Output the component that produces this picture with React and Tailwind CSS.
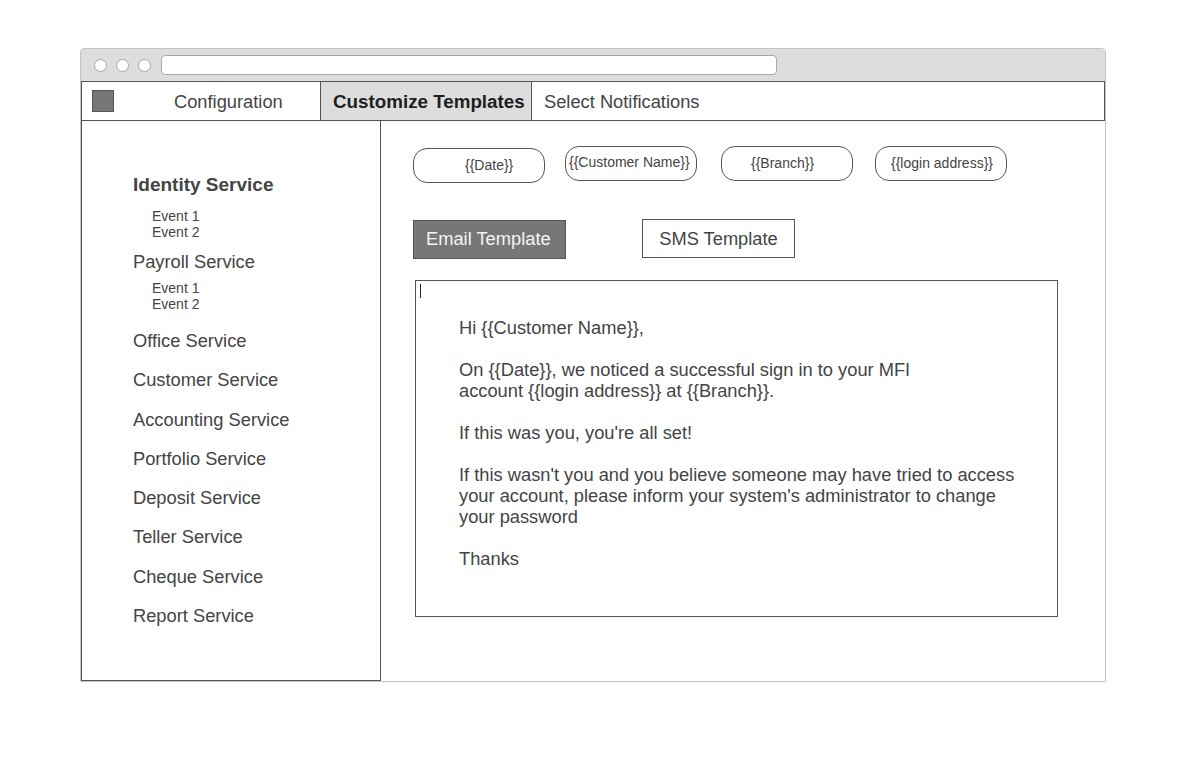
import React from 'react';

const services = [
  { name: 'Office Service' },
  { name: 'Customer Service' },
  { name: 'Accounting Service' },
  { name: 'Portfolio Service' },
  { name: 'Deposit Service' },
  { name: 'Teller Service' },
  { name: 'Cheque Service' },
  { name: 'Report Service' },
];

const Events = ({ className = '' }) => (
  <div className={`pl-[19px] text-[14px] leading-[16px] ${className}`}>
    <div>Event 1</div>
    <div>Event 2</div>
  </div>
);

const Pill = ({ children, className = '' }) => (
  <div className={`w-[132px] h-[35px] border border-[#555] rounded-[14px] bg-white flex items-center text-[14px] whitespace-nowrap text-[#444] ${className}`}>
    {children}
  </div>
);

const App = () => {
  const font = { fontFamily: '"Liberation Sans", Arial, sans-serif' };

  return (
    <div className="w-full h-[760px] bg-white pt-[48px] pl-[80px] text-[#444]" style={font}>
      <div className="w-[1026px] border border-[#c4c4c4] rounded-t-[4px] bg-white">
        {/* title bar */}
        <div className="h-[32px] bg-[#dddddd] rounded-t-[4px] flex items-center pl-[13px]">
          <div className="flex gap-[9px]">
            <span className="w-[13px] h-[13px] rounded-full bg-white border border-[#a8a8a8]" />
            <span className="w-[13px] h-[13px] rounded-full bg-white border border-[#a8a8a8]" />
            <span className="w-[13px] h-[13px] rounded-full bg-white border border-[#a8a8a8]" />
          </div>
          <div className="ml-[10px] w-[616px] h-[20px] bg-white border border-[#a8a8a8] rounded-[4px]" />
        </div>

        {/* tab bar */}
        <div className="h-[40px] border border-[#555] flex text-[18.3px]">
          <div className="w-[239px] border-r border-[#555] flex items-center pl-[10px]">
            <span className="w-[22px] h-[22px] bg-[#777] border border-[#555]" />
            <span className="ml-[60px] pt-[2px]">Configuration</span>
          </div>
          <div className="w-[211px] border-r border-[#555] bg-[#dddddd] flex items-center pl-[12px] pt-[2px] font-bold text-[18.8px] text-[#1e1e1e]">
            Customize Templates
          </div>
          <div className="flex-1 flex items-center pl-[12px] pt-[2px]">Select Notifications</div>
        </div>

        {/* body */}
        <div className="flex h-[560px]">
          <div className="w-[300px] border-l border-r border-b border-[#555] pl-[51px] pt-[53px]">
            <div className="text-[19px] leading-[21px] font-bold">Identity Service</div>
            <Events className="mt-[13px]" />
            <div className="mt-[11px] text-[18.3px] leading-[21px]">Payroll Service</div>
            <Events className="mt-[8px]" />
            <div className="mt-[9px] text-[18.3px]">
              {services.map((s) => (
                <div key={s.name} className="h-[39.3px] flex items-center">{s.name}</div>
              ))}
            </div>
          </div>

          <div className="flex-1 pl-[32px] pt-[25px]">
            <div className="flex items-start">
              <Pill className="mt-[2px] pl-[51px]">{'{{Date}}'}</Pill>
              <Pill className="ml-[20px] pl-[3px] pb-[3px]">{'{{Customer Name}}'}</Pill>
              <Pill className="ml-[24px] pl-[29px]">{'{{Branch}}'}</Pill>
              <Pill className="ml-[22px] pl-[15px]">{'{{login address}}'}</Pill>
            </div>

            <div className="flex items-start mt-[36px] text-[18.3px]">
              <button className="mt-[1px] w-[153px] h-[39px] bg-[#777] border border-[#555] text-[#f4f4f4] text-left pl-[12px] pb-[2px]">
                Email Template
              </button>
              <button className="ml-[76px] w-[153px] h-[39px] bg-white border border-[#555] text-[#444]">
                SMS Template
              </button>
            </div>

            <div className="relative mt-[21px] ml-[2px] w-[643px] h-[337px] border border-[#555] pl-[43px] pt-[36px] text-[18.3px] leading-[21px]">
              <span className="absolute left-[4px] top-[3px] w-[1px] h-[14px] bg-[#222]" />
              <p>Hi {'{{Customer Name}}'},</p>
              <p className="mt-[21px]">
                On {'{{Date}}'}, we noticed a successful sign in to your MFI
                <br />
                account {'{{login address}}'} at {'{{Branch}}'}.
              </p>
              <p className="mt-[21px]">If this was you, you're all set!</p>
              <p className="mt-[21px]">
                If this wasn't you and you believe someone may have tried to access
                <br />
                your account, please inform your system's administrator to change
                <br />
                your password
              </p>
              <p className="mt-[21px]">Thanks</p>
            </div>
          </div>
        </div>
      </div>
    </div>
  );
};

export default App;
